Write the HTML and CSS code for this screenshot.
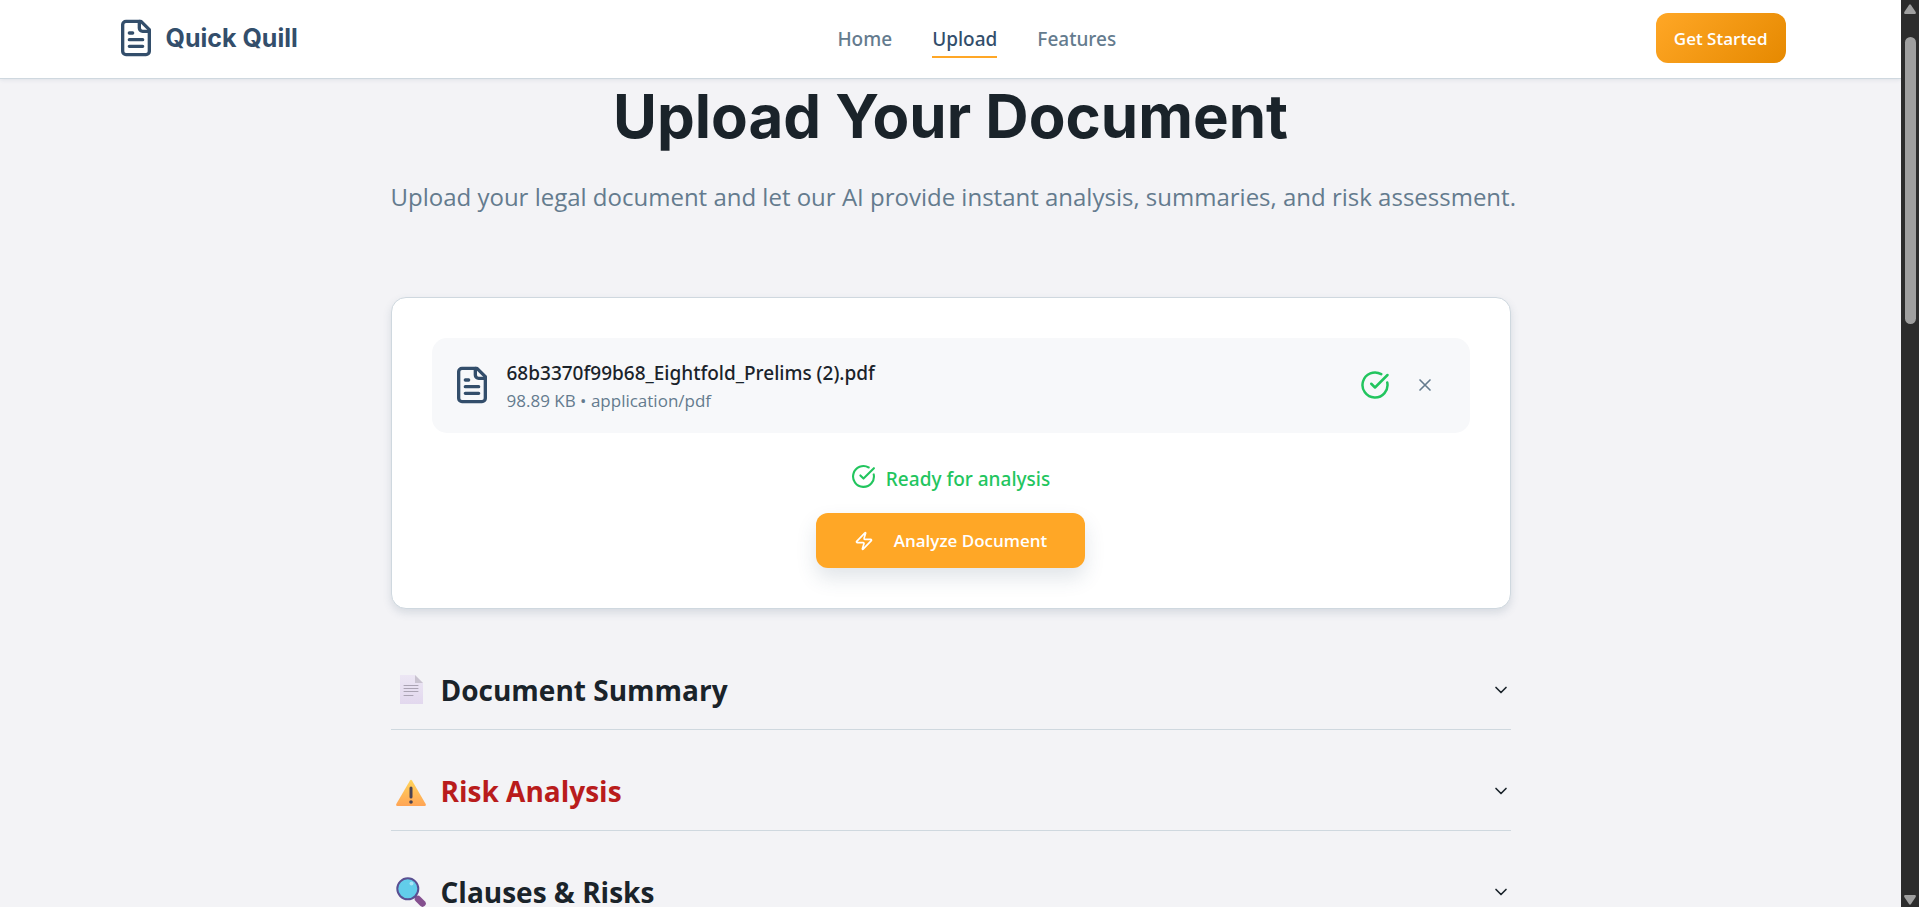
FILE: index.html
```html
<!DOCTYPE html>
<html lang="en">
<head>
<meta charset="utf-8">
<title>Quick Quill</title>
<link rel="stylesheet" href="styles.css">
</head>
<body>
<div class="page">
  <header class="header">
    <div class="header-inner">
      <a class="logo" href="#">
        <svg class="icon-xl" viewBox="0 0 24 24"><path d="M15 2H6a2 2 0 0 0-2 2v16a2 2 0 0 0 2 2h12a2 2 0 0 0 2-2V7Z"/><path d="M14 2v4a2 2 0 0 0 2 2h4"/><path d="M10 9H8M16 13H8M16 17H8"/></svg>
        <span class="logo-text">Quick Quill</span>
      </a>
      <nav class="nav">
        <a class="nav-link" href="#">Home</a>
        <a class="nav-link nav-link-active" href="#">Upload</a>
        <a class="nav-link" href="#">Features</a>
      </nav>
      <button class="btn btn-start" type="button">Get Started</button>
    </div>
  </header>
  <main class="main">
    <h1 class="title">Upload Your Document</h1>
    <p class="subtitle">Upload your legal document and let our AI provide instant analysis, summaries, and risk assessment.</p>
    <section class="card">
      <div class="file">
        <svg class="icon-xl" viewBox="0 0 24 24"><path d="M15 2H6a2 2 0 0 0-2 2v16a2 2 0 0 0 2 2h12a2 2 0 0 0 2-2V7Z"/><path d="M14 2v4a2 2 0 0 0 2 2h4"/><path d="M10 9H8M16 13H8M16 17H8"/></svg>
        <div class="file-info">
          <div class="file-name">68b3370f99b68_Eightfold_Prelims (2).pdf</div>
          <div class="file-meta">98.89 KB • application/pdf</div>
        </div>
        <svg class="icon-lg ok" viewBox="0 0 24 24"><path d="M21.801 10A10 10 0 1 1 17 3.335"/><path d="m9 11 3 3L22 4"/></svg>
        <button class="remove" type="button" aria-label="Remove file"><svg class="icon-sm" viewBox="0 0 24 24"><path d="M18 6 6 18M6 6l12 12"/></svg></button>
      </div>
      <div class="ready">
        <svg class="icon-md" viewBox="0 0 24 24"><path d="M21.801 10A10 10 0 1 1 17 3.335"/><path d="m9 11 3 3L22 4"/></svg>
        <span>Ready for analysis</span>
      </div>
      <button class="btn btn-analyze" type="button">
        <svg class="icon-sm" viewBox="0 0 24 24"><path d="M4 14a1 1 0 0 1-.78-1.63l9.9-10.2a.5.5 0 0 1 .86.46l-1.92 6.02A1 1 0 0 0 13 10h7a1 1 0 0 1 .78 1.63l-9.9 10.2a.5.5 0 0 1-.86-.46l1.92-6.02A1 1 0 0 0 11 14z"/></svg>
        <span>Analyze Document</span>
      </button>
    </section>
    <div class="sections">
      <button class="section" type="button">
        <svg class="emoji" viewBox="0 0 30 30"><defs><linearGradient id="paper" x1="0" y1="0" x2="0" y2="1"><stop offset="0" stop-color="#ece6f4"/><stop offset="1" stop-color="#e2d8ee"/></linearGradient></defs><path fill="url(#paper)" d="M4 0h15l8 8v21H4z"/><path fill="#c9c3d0" d="M19 0l8 8h-8z"/><path stroke="#aaa3b3" stroke-linecap="round" d="M8 10.500h14M8 13.500h14M8 16.500h14M8 20.500h9"/></svg>
        <span class="section-title">Document Summary</span>
        <svg class="icon-sm" viewBox="0 0 24 24"><path d="m6 9 6 6 6-6"/></svg>
      </button>
      <button class="section" type="button">
        <svg class="emoji" viewBox="0 0 30 30"><defs><linearGradient id="warn" x1="0" y1="0" x2="0" y2="1"><stop offset="0" stop-color="#ffd45a"/><stop offset="1" stop-color="#ffa455"/></linearGradient></defs><path fill="url(#warn)" d="M14 4.500q1-1.500 2 0l13.700 23.500q.6 2-1 2H1.300q-1.600 0-1-2z"/><path stroke="#4a4352" stroke-width="3" stroke-linecap="round" d="M15 12v9"/><circle cx="15" cy="26" r="1.800" fill="#4a4352"/></svg>
        <span class="section-title section-title-risk">Risk Analysis</span>
        <svg class="icon-sm" viewBox="0 0 24 24"><path d="m6 9 6 6 6-6"/></svg>
      </button>
      <button class="section" type="button">
        <svg class="emoji" viewBox="0 0 30 30"><path stroke="#7a4a8c" stroke-width="3" d="M18 18l4 4"/><path stroke="#85508f" stroke-width="6.500" stroke-linecap="round" d="M22 22l4.500 4.500"/><circle cx="11.800" cy="11.800" r="10.500" fill="#62cdea" stroke="#5a4f92" stroke-width="2"/><circle cx="15.500" cy="6.500" r="2" fill="#a8e6f8"/></svg>
        <span class="section-title">Clauses &amp; Risks</span>
        <svg class="icon-sm" viewBox="0 0 24 24"><path d="m6 9 6 6 6-6"/></svg>
      </button>
    </div>
  </main>
</div>
<div class="scrollbar" aria-hidden="true">
  <svg class="arrow" viewBox="0 0 12 10"><path d="M5 1q1-1.300 2 0l4.700 7q.6 2-.8 2H1.100q-1.400 0-.8-2z"/></svg>
  <div class="track"><div class="thumb"></div></div>
  <svg class="arrow" viewBox="0 0 12 10"><path d="M5 9q1 1.300 2 0l4.700-7q.6-2-.8-2H1.100Q-.3 0 .3 2z"/></svg>
</div>
</body>
</html>
```
FILE: styles.css
```css
* { box-sizing: border-box; }
body {
  margin: 0;
  height: 100vh;
  overflow: hidden;
  display: grid;
  grid-template-columns: 1fr 18px;
  background: #f3f3f6;
  color: #1a232a;
  font-family: "Open Sans", "Noto Sans", sans-serif;
  font-size: 19px;
}
button { font: inherit; color: inherit; border: 0; background: none; cursor: pointer; }
a { text-decoration: none; color: inherit; }
svg { flex: none; fill: none; display: block; }
.icon-xl, .icon-lg, .icon-md, .icon-sm {
  stroke: currentColor;
  stroke-width: 2;
  stroke-linecap: round;
  stroke-linejoin: round;
}
.icon-xl { width: 40px; height: 40px; color: #334e6b; }
.icon-lg { width: 30px; height: 30px; }
.icon-md { width: 25px; height: 25px; }
.icon-sm { width: 20px; height: 20px; }
.page { height: 100vh; overflow: hidden; }

.header {
  background: #fff;
  border-bottom: 1px solid #cfd8df;
  box-shadow: 0 1px 4px rgba(51, 78, 107, 0.1);
}
.header-inner {
  max-width: 1750px;
  min-height: 78px;
  margin: 0 auto;
  padding: 0 40px 2px;
  display: flex;
  align-items: center;
  justify-content: space-between;
}
.logo { display: flex; align-items: center; gap: 10px; color: #334e6b; }
.logo-text { font: 700 25px/38px Inter, sans-serif; }
.nav, .file-name, .ready { font-family: "Noto Sans", "Open Sans", sans-serif; font-weight: 500; }
.nav { display: flex; gap: 40px; color: #647b8e; }
.nav-link { padding: 6px 0 2px; line-height: 30px; border-bottom: 2px solid transparent; }
.nav-link-active { color: #334e6b; border-color: #ffa726; }
.btn { border-radius: 12px; color: #fff; font-weight: 600; font-size: 17px; }
.btn-start {
  padding: 14px 18px 12px;
  line-height: 24px;
  background: linear-gradient(135deg, #ffa726, #e68900);
}

.main { max-width: 1120px; margin: 0 auto; }
.title { margin: 0; text-align: center; font: 700 60px/75px Inter, sans-serif; }
.subtitle {
  margin: 23px 0 80px;
  text-align: center;
  white-space: nowrap;
  font-size: 24px;
  line-height: 40px;
  color: #647b8e;
}
.card {
  padding: 40px;
  display: flex;
  flex-direction: column;
  align-items: center;
  background: #fff;
  border: 1px solid #cfd8df;
  border-radius: 15px;
  box-shadow: 0 4px 8px rgba(51, 78, 107, 0.15);
}
.file {
  width: 100%;
  padding: 18px 20px 20px;
  display: flex;
  align-items: center;
  background: #f7f8fa;
  border-radius: 15px;
}
.file-info { flex: 1; margin-left: 15px; padding-top: 2px; }
.file-name { line-height: 30px; }
.file-meta { font-size: 17px; line-height: 25px; color: #647b8e; }
.ok { color: #22c55e; }
.remove { margin-left: 10px; padding: 15px; color: #647b8e; }
.file-info + .ok { align-self: center; }
.ready {
  margin: 31px 0 19px;
  display: flex;
  align-items: flex-start;
  gap: 10px;
  line-height: 30px;
  color: #22c55e;
}
.btn-analyze {
  min-height: 55px;
  padding: 0 38px;
  display: flex;
  align-items: center;
  gap: 20px;
  background: #ffa726;
  box-shadow: 0 10px 20px rgba(51, 78, 107, 0.15);
}

.sections { margin-top: 66px; display: grid; gap: 46px; }
.section {
  padding: 0 0 24px 5px;
  display: flex;
  align-items: center;
  gap: 15px;
  text-align: left;
  border-bottom: 1px solid #cfd8df;
}
.emoji { width: 30px; height: 30px; }
.section-title { flex: 1; font-size: 28px; line-height: 30px; font-weight: 700; }
.section-title-risk { color: #b91c1c; }

.scrollbar {
  height: 100vh;
  padding: 4px 3px 2px;
  display: flex;
  flex-direction: column;
  align-items: center;
  background: #2c2c2c;
}
.arrow { width: 12px; height: 10px; fill: #9f9f9f; }
.track { flex: 1; padding-top: 23px; }
.thumb { width: 11px; height: 287px; border-radius: 6px; background: #9f9f9f; }
```
